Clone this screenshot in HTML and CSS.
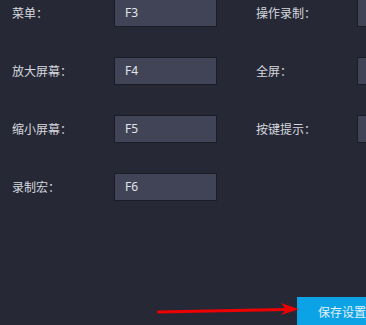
FILE: index.html
```html
<!DOCTYPE html>
<html>
<head>
<meta charset="utf-8">
<link rel="stylesheet" href="styles.css">
</head>
<body>
<div class="page">
  <div class="form">
    <div class="row">
      <div class="cell left"><span class="label">菜单：</span><div class="field">F3</div></div>
      <div class="cell"><span class="label">操作录制：</span><div class="field"></div></div>
    </div>
    <div class="row">
      <div class="cell left"><span class="label">放大屏幕：</span><div class="field">F4</div></div>
      <div class="cell"><span class="label">全屏：</span><div class="field"></div></div>
    </div>
    <div class="row">
      <div class="cell left"><span class="label">缩小屏幕：</span><div class="field">F5</div></div>
      <div class="cell"><span class="label">按键提示：</span><div class="field"></div></div>
    </div>
    <div class="row">
      <div class="cell left"><span class="label">录制宏：</span><div class="field">F6</div></div>
    </div>
  </div>
  <div class="footer">
    <button class="save">保存设置</button>
  </div>
  <svg class="arrow" width="150" height="16" viewBox="0 0 150 16">
    <line x1="2.5" y1="10" x2="130" y2="7.5" stroke="#ee0000" stroke-width="3" stroke-linecap="round"/>
    <polygon points="125,1 143,7.2 125,13 130,7.4" fill="#ee0000"/>
  </svg>
</div>
</body>
</html>
```

FILE: styles.css
```css
html, body {
  margin: 0;
  padding: 0;
  background: #262836;
  overflow: hidden;
}
.page {
  position: relative;
  width: 366px;
  height: 325px;
  overflow: hidden;
  background: #262836;
  font-family: "Noto Sans CJK SC", "Noto Sans", sans-serif;
  color: #d6d8df;
}
.form {
  display: flex;
  flex-direction: column;
  gap: 30px;
  margin-top: -1px;
  padding-left: 12px;
}
.row {
  display: flex;
  height: 28px;
}
.cell {
  display: flex;
  align-items: center;
  flex: none;
}
.cell.left {
  width: 244px;
}
.label {
  flex: none;
  width: 102px;
  font-size: 12px;
  line-height: 16px;
}
.cell:not(.left) .label {
  width: 101px;
}
.field {
  flex: none;
  box-sizing: border-box;
  width: 103px;
  height: 28px;
  background: #414456;
  border: 1px solid #1b1d26;
  padding-left: 10px;
  font-family: "Noto Sans", sans-serif;
  font-size: 12px;
  line-height: 26px;
  color: #e2e4ea;
}
.cell:not(.left) .field {
  width: 40px;
}
.footer {
  display: flex;
  padding-left: 297px;
  margin-top: 96px;
}
.save {
  flex: none;
  box-sizing: border-box;
  width: 80px;
  height: 30px;
  border: 0;
  margin: 0;
  padding: 0 0 2px 21px;
  background: #0ba3e6;
  color: #e3f1fa;
  font-family: "Noto Sans CJK SC", sans-serif;
  font-size: 12px;
  text-align: left;
}
.arrow {
  position: absolute;
  left: 156px;
  top: 302px;
}
```
